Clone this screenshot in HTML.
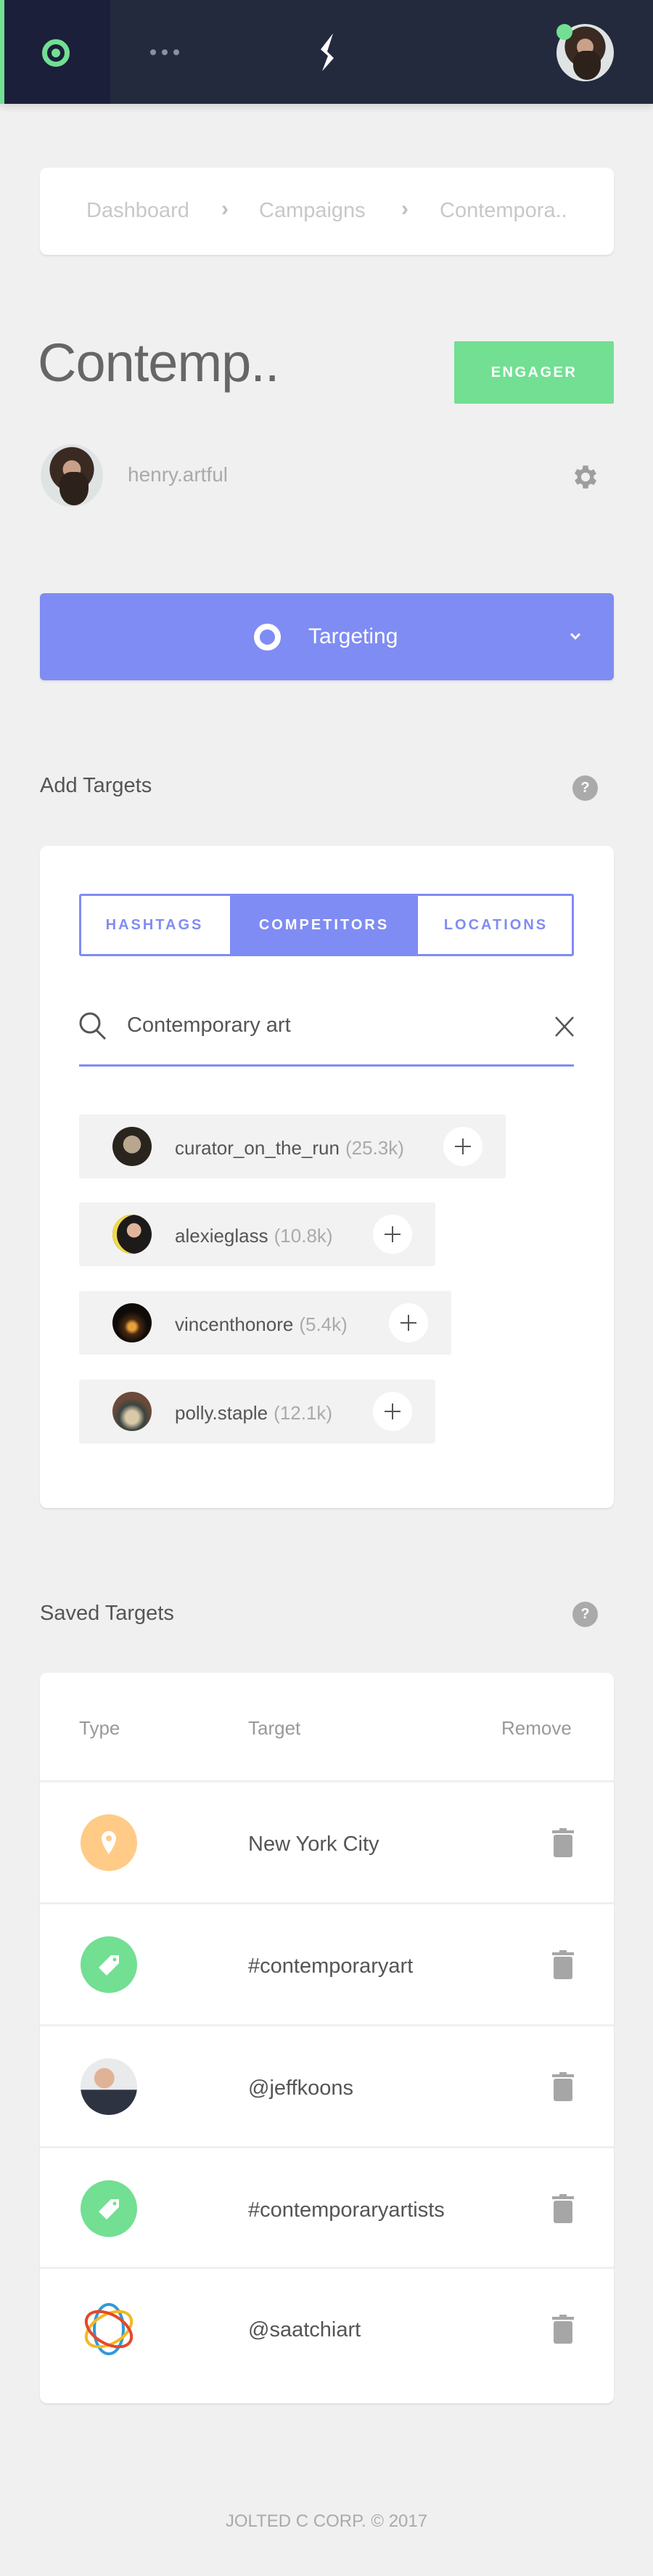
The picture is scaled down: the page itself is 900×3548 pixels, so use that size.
<!DOCTYPE html>
<html><head><meta charset="utf-8"><style>
*{margin:0;padding:0;box-sizing:border-box}
body{width:900px;height:3548px;background:#f0f0f0;font-family:"Liberation Sans",sans-serif;position:relative;overflow:hidden}
.a{position:absolute}
.card{position:absolute;background:#fff;border-radius:10px;box-shadow:0 2px 2px rgba(0,0,0,.08)}
.t{position:absolute;white-space:nowrap;line-height:1}
.chip{position:absolute;left:109px;height:88px;background:#f2f2f2;border-radius:3px}
.chip .av{position:absolute;left:46px;top:17px;width:54px;height:54px;border-radius:50%}
.chip .nm{position:absolute;left:132px;top:31px;font-size:26px;color:#555;white-space:nowrap}
.chip .nm span{color:#aaa;margin-left:8px}
.plus{position:absolute;top:17px;width:54px;height:54px;border-radius:50%;background:#fff}
.plus:before,.plus:after{content:"";position:absolute;background:#555;left:16px;top:26px;width:22px;height:2px}
.plus:after{left:26px;top:16px;width:2px;height:22px}
.row{position:absolute;left:55px;width:791px;border-top:3px solid #efefef}
.ic{position:absolute;left:56px;width:78px;height:78px;border-radius:50%}
.rt{position:absolute;left:287px;font-size:29px;color:#555;white-space:nowrap}
.trash{position:absolute;left:706px;width:30px;height:40px}
</style></head><body>
<!-- nav -->
<div class="a" style="left:0;top:0;width:900px;height:143px;background:#232a3e;box-shadow:0 4px 10px rgba(0,0,0,.12)"></div>
<div class="a" style="left:0;top:0;width:152px;height:143px;background:#1b1f3a"></div>
<div class="a" style="left:0;top:0;width:6px;height:143px;background:#72df93"></div>
<div class="a" style="left:58px;top:54px;width:38px;height:38px;border-radius:50%;border:7px solid #72df93"></div>
<div class="a" style="left:71px;top:67px;width:12px;height:12px;border-radius:50%;background:#72df93"></div>
<div class="a" style="left:207px;top:68px;width:8px;height:8px;border-radius:50%;background:#8b8fa3"></div>
<div class="a" style="left:223px;top:68px;width:8px;height:8px;border-radius:50%;background:#8b8fa3"></div>
<div class="a" style="left:239px;top:68px;width:8px;height:8px;border-radius:50%;background:#8b8fa3"></div>
<svg class="a" style="left:440px;top:44px" width="22" height="56" viewBox="0 0 22 56"><path d="M19 2 L2 24 L12 33 L4 54 L20 36 L11 27 Z" fill="#fff"/></svg>
<div class="a" style="left:767px;top:33px;width:79px;height:79px;border-radius:50%;background:radial-gradient(circle at 50% 40%,#c9a089 0 18%,#3a2a22 19% 45%,#dfe3e3 46%);"></div>
<div class="a" style="left:790px;top:70px;width:38px;height:40px;border-radius:40% 40% 50% 50%;background:#2c211b"></div>
<div class="a" style="left:767px;top:33px;width:22px;height:22px;border-radius:50%;background:#72df93"></div>
<!-- breadcrumb -->
<div class="card" style="left:55px;top:231px;width:791px;height:120px"></div>
<div class="t" style="left:119px;top:276px;font-size:29px;color:#c8c8c8">Dashboard</div>
<div class="t" style="left:305px;top:273px;font-size:30px;font-weight:bold;color:#c0c0c0">›</div>
<div class="t" style="left:357px;top:276px;font-size:29px;color:#c8c8c8">Campaigns</div>
<div class="t" style="left:553px;top:273px;font-size:30px;font-weight:bold;color:#c0c0c0">›</div>
<div class="t" style="left:606px;top:276px;font-size:29px;color:#c8c8c8">Contempora..</div>
<!-- title -->
<div class="t" style="left:52px;top:463px;font-size:74px;color:#666;letter-spacing:-1px">Contemp..</div>
<div class="a" style="left:626px;top:470px;width:220px;height:86px;background:#72df93;border-radius:2px;color:#fff;font-weight:bold;font-size:20px;letter-spacing:2.5px;text-align:center;line-height:86px">ENGAGER</div>
<div class="a" style="left:56px;top:612px;width:86px;height:86px;border-radius:50%;background:radial-gradient(circle at 50% 40%,#c9a089 0 18%,#3a2a22 19% 45%,#dfe3e3 46%)"></div>
<div class="a" style="left:82px;top:650px;width:40px;height:46px;border-radius:40% 40% 50% 50%;background:#2c211b"></div>
<div class="t" style="left:176px;top:640px;font-size:28px;color:#aaa">henry.artful</div>
<svg class="a" style="left:786px;top:636px" width="42" height="42" viewBox="0 0 24 24"><path fill="#9e9e9e" d="M19.4 13a7.5 7.5 0 000-2l2.1-1.6-2-3.5-2.5 1a7 7 0 00-1.7-1L15 3h-4l-.4 2.7a7 7 0 00-1.7 1l-2.5-1-2 3.5L6.6 11a7.5 7.5 0 000 2l-2.1 1.6 2 3.5 2.5-1a7 7 0 001.7 1L11 21h4l.4-2.7a7 7 0 001.7-1l2.5 1 2-3.5zM13 15.5a3.5 3.5 0 110-7 3.5 3.5 0 010 7z" transform="translate(-1 0)"/></svg>
<!-- targeting -->
<div class="a" style="left:55px;top:817px;width:791px;height:120px;background:#7f8cf3;border-radius:6px;box-shadow:0 2px 3px rgba(0,0,0,.08)"></div>
<div class="a" style="left:350px;top:859px;width:37px;height:37px;border-radius:50%;border:8px solid #fff"></div>
<div class="t" style="left:425px;top:862px;font-size:30px;color:#fff">Targeting</div>
<svg class="a" style="left:785px;top:870px" width="16" height="12" viewBox="0 0 16 12"><path d="M2 3 L8 9 L14 3" stroke="#fff" stroke-width="3" fill="none"/></svg>
<!-- add targets -->
<div class="t" style="left:55px;top:1068px;font-size:29px;color:#555">Add Targets</div>
<div class="a" style="left:789px;top:1068px;width:35px;height:35px;border-radius:50%;background:#aaa;color:#fff;font-weight:bold;font-size:20px;text-align:center;line-height:35px">?</div>
<div class="card" style="left:55px;top:1165px;width:791px;height:912px"></div>
<div class="a" style="left:109px;top:1231px;width:682px;height:86px;border:3px solid #7f8cf3;border-radius:3px"></div>
<div class="a" style="left:317px;top:1231px;width:259px;height:86px;background:#7f8cf3"></div>
<div class="t" style="left:109px;top:1264px;width:208px;text-align:center;font-size:20px;font-weight:bold;letter-spacing:3px;color:#7f8cf3">HASHTAGS</div>
<div class="t" style="left:317px;top:1264px;width:259px;text-align:center;font-size:20px;font-weight:bold;letter-spacing:3px;color:#fff">COMPETITORS</div>
<div class="t" style="left:576px;top:1264px;width:215px;text-align:center;font-size:20px;font-weight:bold;letter-spacing:3px;color:#7f8cf3">LOCATIONS</div>
<svg class="a" style="left:107px;top:1392px" width="42" height="42" viewBox="0 0 42 42"><circle cx="17" cy="17" r="13" stroke="#555" stroke-width="3" fill="none"/><path d="M26 27 L38 39" stroke="#555" stroke-width="3"/></svg>
<div class="t" style="left:175px;top:1398px;font-size:29px;color:#555">Contemporary art</div>
<svg class="a" style="left:764px;top:1399px" width="28" height="30" viewBox="0 0 28 30"><path d="M2 2 L26 28 M26 2 L2 28" stroke="#555" stroke-width="2.5"/></svg>
<div class="a" style="left:109px;top:1466px;width:682px;height:3px;background:#7f8cf3"></div>
<!-- chips -->
<div class="chip" style="top:1535px;width:588px"><div class="av" style="background:radial-gradient(circle at 50% 45%,#b8a78e 0 30%,#2a241f 31%)"></div><div class="nm">curator_on_the_run<span>(25.3k)</span></div><div class="plus" style="left:502px"></div></div>
<div class="chip" style="top:1656px;width:491px"><div class="av" style="background:radial-gradient(circle at 55% 40%,#e0b49c 0 22%,#1d1a1a 23%);box-shadow:inset 6px 0 0 #f1d94a"></div><div class="nm">alexieglass<span>(10.8k)</span></div><div class="plus" style="left:405px"></div></div>
<div class="chip" style="top:1778px;width:513px"><div class="av" style="background:radial-gradient(circle at 50% 60%,#e9a23b 0 12%,#4a2a12 25%,#0f0b08 50%)"></div><div class="nm">vincenthonore<span>(5.4k)</span></div><div class="plus" style="left:427px"></div></div>
<div class="chip" style="top:1900px;width:491px"><div class="av" style="background:radial-gradient(circle at 50% 65%,#d8c9a8 0 20%,#3a4440 40%,#6b4a3a 60%)"></div><div class="nm">polly.staple<span>(12.1k)</span></div><div class="plus" style="left:405px"></div></div>
<!-- saved -->
<div class="t" style="left:55px;top:2208px;font-size:29px;color:#555">Saved Targets</div>
<div class="a" style="left:789px;top:2206px;width:35px;height:35px;border-radius:50%;background:#aaa;color:#fff;font-weight:bold;font-size:20px;text-align:center;line-height:35px">?</div>
<div class="card" style="left:55px;top:2304px;width:791px;height:1006px"></div>
<div class="t" style="left:109px;top:2367px;font-size:26px;color:#999">Type</div>
<div class="t" style="left:342px;top:2367px;font-size:26px;color:#999">Target</div>
<div class="t" style="left:691px;top:2367px;font-size:26px;color:#999">Remove</div>
<div class="row" style="top:2452px;height:168px"><div class="ic" style="top:44px;background:#ffcb86"></div><svg class="a" style="left:82px;top:65px" width="26" height="36" viewBox="0 0 26 36"><path d="M13 2a10 10 0 00-10 10c0 8 10 22 10 22s10-14 10-22A10 10 0 0013 2z" fill="#fff"/><circle cx="13" cy="12" r="4" fill="#ffcb86"/></svg><div class="rt" style="top:69px">New York City</div><svg class="trash" style="top:63px" viewBox="0 0 30 40"><rect x="0" y="3" width="30" height="4" fill="#a6a6a6"/><rect x="10" y="0" width="10" height="4" rx="1" fill="#a6a6a6"/><rect x="2" y="9" width="26" height="31" rx="3" fill="#a6a6a6"/></svg></div>
<div class="row" style="top:2620px;height:168px"><div class="ic" style="top:44px;background:#72df93"></div><svg class="a" style="left:78px;top:66px" width="34" height="34" viewBox="0 0 34 34"><path d="M20 4 L31 4 L31 15 L14 32 L3 21 Z" fill="#fff"/><circle cx="25" cy="10" r="2.5" fill="#72df93"/></svg><div class="rt" style="top:69px">#contemporaryart</div><svg class="trash" style="top:63px" viewBox="0 0 30 40"><rect x="0" y="3" width="30" height="4" fill="#a6a6a6"/><rect x="10" y="0" width="10" height="4" rx="1" fill="#a6a6a6"/><rect x="2" y="9" width="26" height="31" rx="3" fill="#a6a6a6"/></svg></div>
<div class="row" style="top:2788px;height:168px"><div class="ic" style="top:44px;background:radial-gradient(circle at 42% 35%,#e0b396 0 20%,transparent 21%),linear-gradient(#e9eaec 55%,#2d3340 56%)"></div><div class="rt" style="top:69px">@jeffkoons</div><svg class="trash" style="top:63px" viewBox="0 0 30 40"><rect x="0" y="3" width="30" height="4" fill="#a6a6a6"/><rect x="10" y="0" width="10" height="4" rx="1" fill="#a6a6a6"/><rect x="2" y="9" width="26" height="31" rx="3" fill="#a6a6a6"/></svg></div>
<div class="row" style="top:2956px;height:168px"><div class="ic" style="top:44px;background:#72df93"></div><svg class="a" style="left:78px;top:66px" width="34" height="34" viewBox="0 0 34 34"><path d="M20 4 L31 4 L31 15 L14 32 L3 21 Z" fill="#fff"/><circle cx="25" cy="10" r="2.5" fill="#72df93"/></svg><div class="rt" style="top:69px">#contemporaryartists</div><svg class="trash" style="top:63px" viewBox="0 0 30 40"><rect x="0" y="3" width="30" height="4" fill="#a6a6a6"/><rect x="10" y="0" width="10" height="4" rx="1" fill="#a6a6a6"/><rect x="2" y="9" width="26" height="31" rx="3" fill="#a6a6a6"/></svg></div>
<div class="row" style="top:3122px;height:188px"><svg class="a" style="left:58px;top:46px" width="74" height="74" viewBox="0 0 74 74"><ellipse cx="37" cy="37" rx="20" ry="34" stroke="#2f9ad8" stroke-width="4" fill="none"/><ellipse cx="37" cy="37" rx="20" ry="34" stroke="#f5b820" stroke-width="4" fill="none" transform="rotate(60 37 37)"/><ellipse cx="37" cy="37" rx="20" ry="34" stroke="#e5482a" stroke-width="4" fill="none" transform="rotate(-60 37 37)"/></svg><div class="rt" style="top:68px">@saatchiart</div><svg class="trash" style="top:63px" viewBox="0 0 30 40"><rect x="0" y="3" width="30" height="4" fill="#a6a6a6"/><rect x="10" y="0" width="10" height="4" rx="1" fill="#a6a6a6"/><rect x="2" y="9" width="26" height="31" rx="3" fill="#a6a6a6"/></svg></div>
<div class="t" style="left:0;width:900px;text-align:center;top:3461px;font-size:24px;color:#aaa">JOLTED C CORP. © 2017</div>
</body></html>
